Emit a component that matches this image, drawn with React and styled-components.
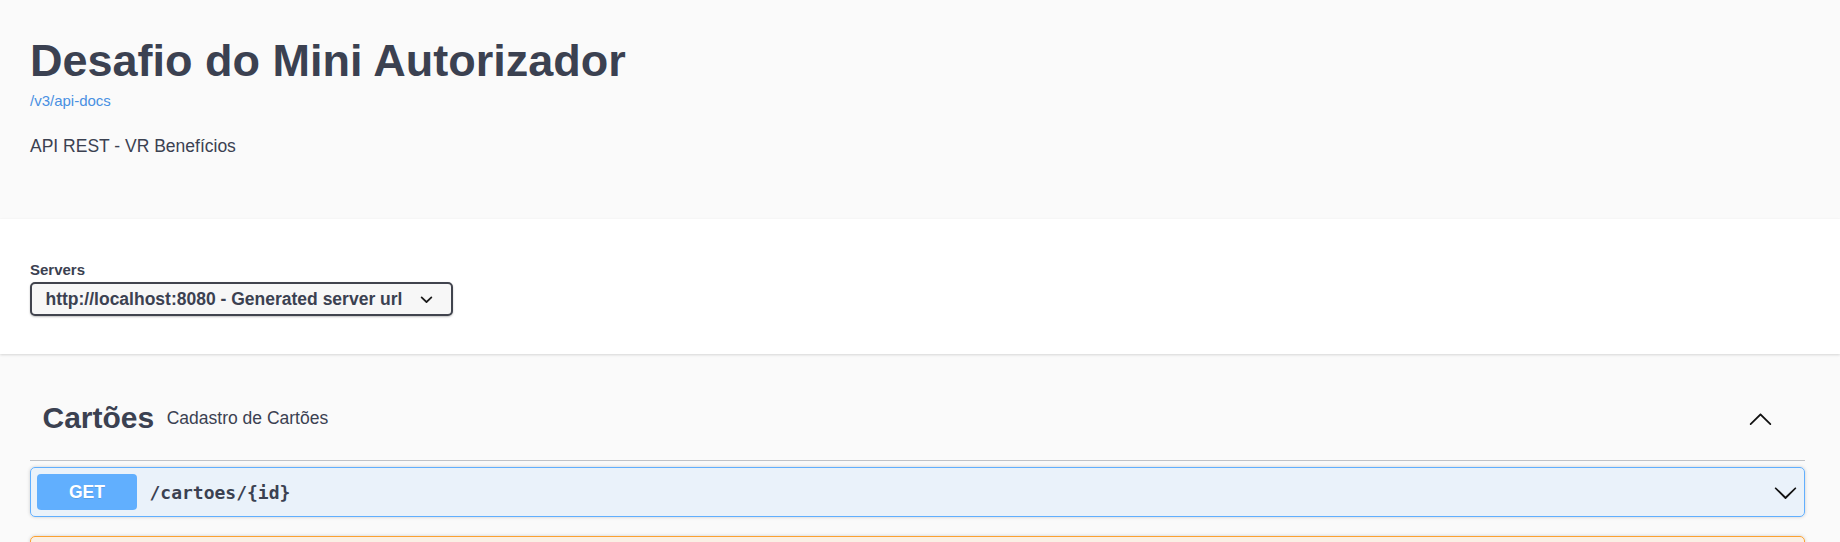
import React from "react";
import styled, { createGlobalStyle } from "styled-components";

const GlobalStyle = createGlobalStyle`
  html, body {
    margin: 0;
    padding: 0;
    background: #fafafa;
    overflow: hidden;
  }
  body {
    font-family: "Liberation Sans", Arial, sans-serif;
    color: #3b4151;
  }
  * {
    box-sizing: border-box;
  }
`;

const Container = styled.div`
  padding: 0 35px 0 30px;
`;

const InfoBand = styled.header`
  height: 219px;
  padding-top: 34px;
  background: #fafafa;
`;

const Title = styled.h1`
  margin: 0;
  font-size: 45px;
  line-height: 54px;
  font-weight: 700;
  color: #3b4151;
`;

const SpecLink = styled.a`
  display: block;
  margin-top: 4px;
  font-size: 15px;
  line-height: 18px;
  color: #4990e2;
  text-decoration: none;
`;

const Description = styled.p`
  margin: 26px 0 0;
  font-size: 17.5px;
  line-height: 21px;
`;

const ServersBand = styled.section`
  position: relative;
  z-index: 1;
  background: #fff;
  padding: 42px 0 38px;
  box-shadow: 0 1px 2.5px 0 rgba(0, 0, 0, 0.15);
`;

const ServersLabel = styled.span`
  display: block;
  margin-bottom: 3px;
  font-size: 15px;
  line-height: 18px;
  font-weight: 700;
`;

const ServerSelect = styled.div`
  width: 423px;
  height: 34px;
  display: flex;
  align-items: center;
  justify-content: space-between;
  padding: 0 12.5px 0 13.5px;
  border: 2px solid #41444e;
  border-radius: 5px;
  background: #f7f7f7;
  box-shadow: 0 1px 2px 0 rgba(0, 0, 0, 0.25);
  font-size: 17.5px;
  font-weight: 700;
  color: #3b4151;
  cursor: pointer;
`;

const OperationsBand = styled.main`
  padding-top: 22px;
`;

const TagHeading = styled.h3`
  margin: 0 0 6px;
  height: 85px;
  display: flex;
  align-items: center;
  padding: 0 32px 0 12.5px;
  border-bottom: 1px solid rgba(59, 65, 81, 0.3);
  font-weight: 400;
`;

const TagName = styled.span`
  font-size: 30px;
  line-height: 36px;
  font-weight: 700;
`;

const TagDescription = styled.small`
  flex: 1;
  padding: 0 12.5px;
  font-size: 17.5px;
  line-height: 21px;
`;

const IconButton = styled.button`
  display: flex;
  width: 25px;
  height: 25px;
  padding: 0;
  border: none;
  background: none;
  cursor: pointer;
`;

const OpBlock = styled.div`
  margin-bottom: 19px;
  border: 1px solid ${({ color }) => color};
  border-radius: 5px;
  background: ${({ tint }) => tint};
  box-shadow: 0 0 3.75px rgba(0, 0, 0, 0.19);
`;

const Summary = styled.div`
  display: flex;
  align-items: center;
  padding: 6px;
`;

const Method = styled.span`
  min-width: 100px;
  height: 36px;
  display: flex;
  align-items: center;
  justify-content: center;
  border-radius: 4px;
  background: ${({ color }) => color};
  color: #fff;
  font-size: 17.5px;
  font-weight: 700;
  text-shadow: 0 1px 0 rgba(0, 0, 0, 0.1);
`;

const Path = styled.span`
  flex: 1;
  padding: 0 12.5px;
  font-family: "DejaVu Sans Mono", "Liberation Mono", monospace;
  font-size: 18px;
  font-weight: 700;
  color: #3b4151;
`;

const SelectArrow = () => (
  <svg width="25" height="25" viewBox="0 0 20 20" aria-hidden="true">
    <path
      fill="#1a1a1a"
      d="M13.418 7.859a.695.695 0 01.978 0 .68.68 0 010 .969l-3.908 3.83a.697.697 0 01-.979 0l-3.908-3.83a.68.68 0 010-.969.695.695 0 01.978 0L10 11l3.418-3.141z"
    />
  </svg>
);

const ArrowUp = () => (
  <svg width="25" height="25" viewBox="0 0 20 20" aria-hidden="true">
    <path
      fill="#111"
      d="M17.418 14.908c.272.268.709.268.979 0s.27-.701 0-.969l-7.908-7.83c-.27-.268-.707-.268-.979 0l-7.908 7.83c-.27.268-.27.701 0 .969.271.268.709.268.979 0L10 7.767l7.418 7.141z"
    />
  </svg>
);

const ArrowDown = () => (
  <svg width="25" height="25" viewBox="0 0 20 20" aria-hidden="true">
    <path
      fill="#111"
      d="M17.418 6.109c.272-.268.709-.268.979 0s.271.701 0 .969l-7.908 7.83c-.27.268-.707.268-.979 0l-7.908-7.83c-.27-.268-.27-.701 0-.969.271-.268.709-.268.979 0L10 13.25l7.418-7.141z"
    />
  </svg>
);

// only the top edge of the second block is inside the frame
const operations = [
  { method: "GET", path: "/cartoes/{id}", color: "#61affe", tint: "rgba(97, 175, 254, 0.1)" },
  { method: "", path: "", color: "#fca130", tint: "rgba(252, 161, 48, 0.1)" },
];

const App = () => {
  return (
    <>
      <GlobalStyle />
      <InfoBand>
        <Container>
          <Title>Desafio do Mini Autorizador</Title>
          <SpecLink href="#">/v3/api-docs</SpecLink>
          <Description>API REST - VR Benefícios</Description>
        </Container>
      </InfoBand>

      <ServersBand>
        <Container>
          <ServersLabel>Servers</ServersLabel>
          <ServerSelect>
            <span>http://localhost:8080 - Generated server url</span>
            <SelectArrow />
          </ServerSelect>
        </Container>
      </ServersBand>

      <OperationsBand>
        <Container>
          <TagHeading>
            <TagName>Cartões</TagName>
            <TagDescription>Cadastro de Cartões</TagDescription>
            <IconButton aria-label="Collapse operation">
              <ArrowUp />
            </IconButton>
          </TagHeading>

          {operations.map((op, i) => (
            <OpBlock key={i} color={op.color} tint={op.tint}>
              <Summary>
                <Method color={op.color}>{op.method}</Method>
                <Path>{op.path}</Path>
                <IconButton aria-label="Expand operation">
                  <ArrowDown />
                </IconButton>
              </Summary>
            </OpBlock>
          ))}
        </Container>
      </OperationsBand>
    </>
  );
};

export default App;
